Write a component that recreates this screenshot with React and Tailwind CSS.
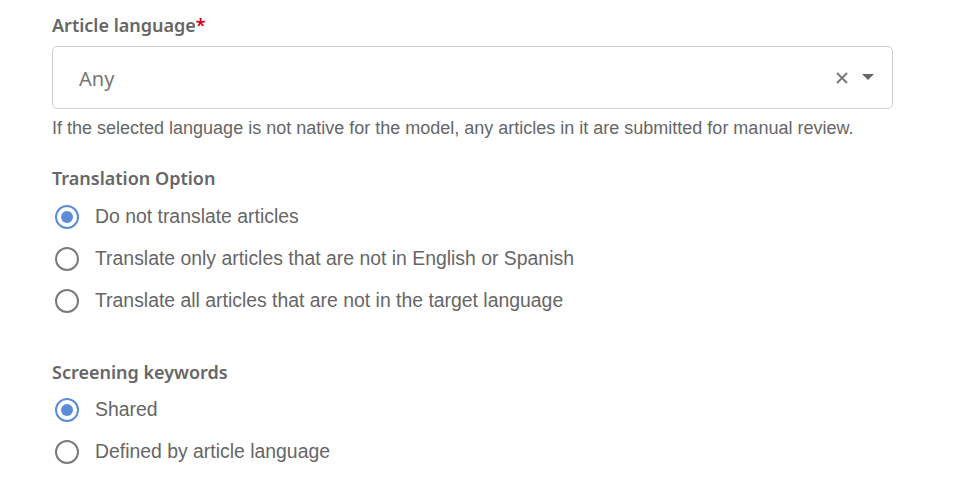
import React from "react";

const labelFont = { fontFamily: '"Noto Sans", "Open Sans", sans-serif' };

function Radio({ checked, label }) {
  return (
    <label className="flex h-[42px] items-center gap-[16px] pl-[3px]">
      <span
        className={
          "flex h-[24px] w-[24px] items-center justify-center rounded-full border-2 " +
          (checked ? "border-[#5b8dd9]" : "border-[#7a7a7a]")
        }
      >
        {checked && <span className="h-[12px] w-[12px] rounded-full bg-[#5b8dd9]" />}
      </span>
      <span className="text-[19.4px] text-[#666]">{label}</span>
    </label>
  );
}

export default function App() {
  return (
    <div
      className="h-[482px] w-[962px] bg-white pl-[52px] pt-[12px]"
      style={{ fontFamily: '"Liberation Sans", Arial, sans-serif' }}
    >
      <div className="h-[26px] text-[18px] font-semibold leading-[26px] text-[#666]" style={labelFont}>
        Article language<span className="text-[#d0021b]">*</span>
      </div>
      <div className="mt-[8px] flex h-[63px] w-[841px] items-center rounded-[5px] border border-[#cfcfcf] pl-[26px] pr-[18px]">
        <span className="flex-1 pt-[2px] text-[20px] text-[#777]" style={labelFont}>Any</span>
        <svg width="14" height="14" viewBox="0 0 14 14" className="mr-[13px]">
          <path d="M2 2 L12 12 M12 2 L2 12" stroke="#777" strokeWidth="1.8" />
        </svg>
        <svg width="12" height="7" viewBox="0 0 12 7">
          <path d="M0 0 H12 L6 6 Z" fill="#666" />
        </svg>
      </div>
      <div className="mt-[9px] text-[18px] leading-[20px] text-[#666]">
        If the selected language is not native for the model, any articles in it are submitted for manual review.
      </div>

      <div className="mt-[27px] h-[26px] text-[18px] font-semibold leading-[26px] text-[#666]" style={labelFont}>
        Translation Option
      </div>
      <div className="mt-[5px] flex flex-col">
        <Radio checked label="Do not translate articles" />
        <Radio label="Translate only articles that are not in English or Spanish" />
        <Radio label="Translate all articles that are not in the target language" />
      </div>

      <div className="mt-[37px] h-[26px] text-[18px] font-semibold leading-[26px] text-[#666]" style={labelFont}>
        Screening keywords
      </div>
      <div className="mt-[4px] flex flex-col">
        <Radio checked label="Shared" />
        <Radio label="Defined by article language" />
      </div>
    </div>
  );
}
